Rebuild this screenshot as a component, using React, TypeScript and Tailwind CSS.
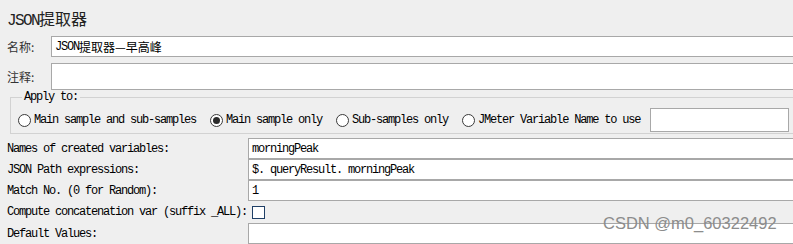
import React from "react"

const mono = "font-mono tracking-[-1.2px]"
const cjk = "font-['Noto_Sans_CJK_SC'] tracking-normal"

function Radio({ checked, label }: { checked?: boolean; label: string }) {
  return (
    <label className="flex items-center gap-[3px]">
      <span className="w-[13px] h-[13px] rounded-full border border-[#3a3a3a] bg-white flex items-center justify-center">
        {checked && <span className="w-[7px] h-[7px] rounded-full bg-[#2a2a2a]" />}
      </span>
      <span>{label}</span>
    </label>
  )
}

function Field({ label, value, h = "h-[21px]" }: { label: string; value?: string; h?: string }) {
  return (
    <div className={`flex items-center ${h}`}>
      <div className="w-[248px] pl-[7px] shrink-0">{label}</div>
      <div className={`flex-1 ${h} bg-white border border-[#a8a8a8] border-r-0 flex items-center pl-[3px]`}>{value}</div>
    </div>
  )
}

export default function App() {
  return (
    <div className={`relative w-[793px] h-[244px] overflow-hidden bg-[#efefef] text-[12px] text-black ${mono}`}>
      <div className="h-[36px] pl-[7px] pt-[8px] text-[16px] leading-[20px] text-[#222] tracking-[-1.6px]">
        JSON<span className={cjk}>提取器</span>
      </div>

      <div className="flex items-center h-[21px]">
        <div className={`w-[51px] pl-[7px] text-[#333] ${cjk}`}>名称:</div>
        <div className="flex-1 h-[21px] bg-white border border-[#a8a8a8] border-r-0 flex items-center pl-[3px]">
          JSON<span className={cjk}>提取器—早高峰</span>
        </div>
      </div>

      <div className="flex items-center h-[27px] mt-[6px]">
        <div className={`w-[51px] pl-[7px] text-[#333] ${cjk}`}>注释:</div>
        <div className="flex-1 h-[27px] bg-white border border-[#a8a8a8] border-r-0" />
      </div>

      <fieldset className="ml-[10px] mt-[1px] -mr-[4px] h-[43px] border border-[#d2d2d2] px-[7px] pt-[5px]">
        <legend className="px-[2px] ml-[4px] leading-[12px]">Apply to:</legend>
        <div className="flex items-center gap-[14px]">
          <Radio label="Main sample and sub-samples" />
          <Radio checked label="Main sample only" />
          <Radio label="Sub-samples only" />
          <Radio label="JMeter Variable Name to use" />
          <div className="flex-1 ml-[-4px] h-[24px] bg-white border border-[#a8a8a8]" />
        </div>
      </fieldset>

      <div className="mt-[4px]">
        <Field label="Names of created variables:" value="morningPeak" />
        <Field label="JSON Path expressions:" value="$. queryResult. morningPeak" />
        <Field label="Match No. (0 for Random):" value="1" />
        <div className="flex items-center h-[22px]">
          <div className="w-[252px] pl-[7px] shrink-0">Compute concatenation var (suffix _ALL):</div>
          <span className="w-[13px] h-[13px] border border-[#1f3f66] bg-white" />
        </div>
        <Field label="Default Values:" />
      </div>

      <div className="absolute left-[603px] top-[213px] text-[16.5px] leading-[20px] tracking-normal text-[#8c8c8c] font-['Liberation_Sans']">
        CSDN @m0_60322492
      </div>
    </div>
  )
}
